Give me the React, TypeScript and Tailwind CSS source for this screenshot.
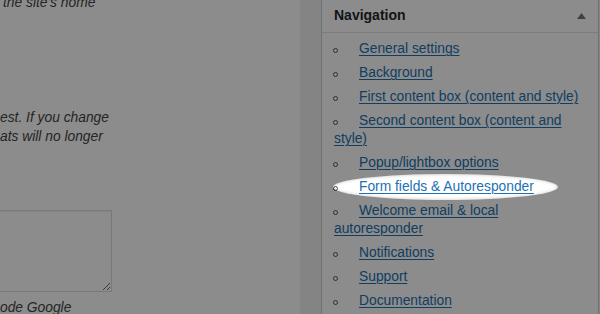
const navItems = [
  'General settings',
  'Background',
  'First content box (content and style)',
  'Second content box (content and style)',
  'Popup/lightbox options',
  'Form fields & Autoresponder',
  'Welcome email & local autoresponder',
  'Notifications',
  'Support',
  'Documentation',
]

export default function App() {
  return (
    <div className="relative h-[314px] w-[600px] overflow-hidden bg-[#f1f1f1] font-['Liberation_Sans',Arial,sans-serif]">
      <div className="flex h-full">
        <div className="w-[300px] shrink-0 bg-white text-[13.8px] italic leading-[19px] text-[#444] whitespace-nowrap">
          <div className="-mt-[7px] pl-[3px]">the site's home</div>
          <div className="mt-[96px]">
            <div>est. If you change</div>
            <div>ats will no longer</div>
          </div>
          <textarea
            readOnly
            className="mt-[64px] -ml-[100px] block h-[82px] w-[212px] border border-[#dddddd] bg-white shadow-[inset_0_1px_2px_rgba(0,0,0,0.07)]"
          />
          <div className="mt-[6px]">ode Google</div>
        </div>

        <div className="w-[21px] shrink-0" />

        <div className="w-[278px] shrink-0 border-x border-[#ccd0d4] bg-white">
          <div className="flex h-[33px] items-center justify-between border-b border-[#e2e4e7] pb-[2px] pl-[12px] pr-[12px]">
            <span className="text-[14px] font-bold text-[#23282d]">Navigation</span>
            <svg width="9" height="6" viewBox="0 0 9 6" className="mt-[1px]">
              <polygon points="4.5,0 9,6 0,6" fill="#72777c" />
            </svg>
          </div>
          <ul className="px-[12px] pt-[7px] text-[13.8px] leading-[18px] text-[#3c434a]">
            {navItems.map(item => (
              <li key={item} className="mb-[6px]">
                <span className="inline-flex w-[25px] items-center">
                  <span className="ml-[-1px] mb-[2px] inline-block h-[5px] w-[5px] rounded-full border border-[#555]" />
                </span>
                <a href="#" className="text-[#2271b1] underline decoration-1 underline-offset-[2px]">{item}</a>
              </li>
            ))}
          </ul>
        </div>
      </div>

      {/* spotlight overlay */}
      <div className="absolute left-[333px] top-[174px] h-[26px] w-[225px] rounded-[50%] shadow-[0_0_0_1200px_rgba(0,0,0,0.45),inset_0_0_3px_1px_rgba(0,0,0,0.15)]" />
    </div>
  )
}
